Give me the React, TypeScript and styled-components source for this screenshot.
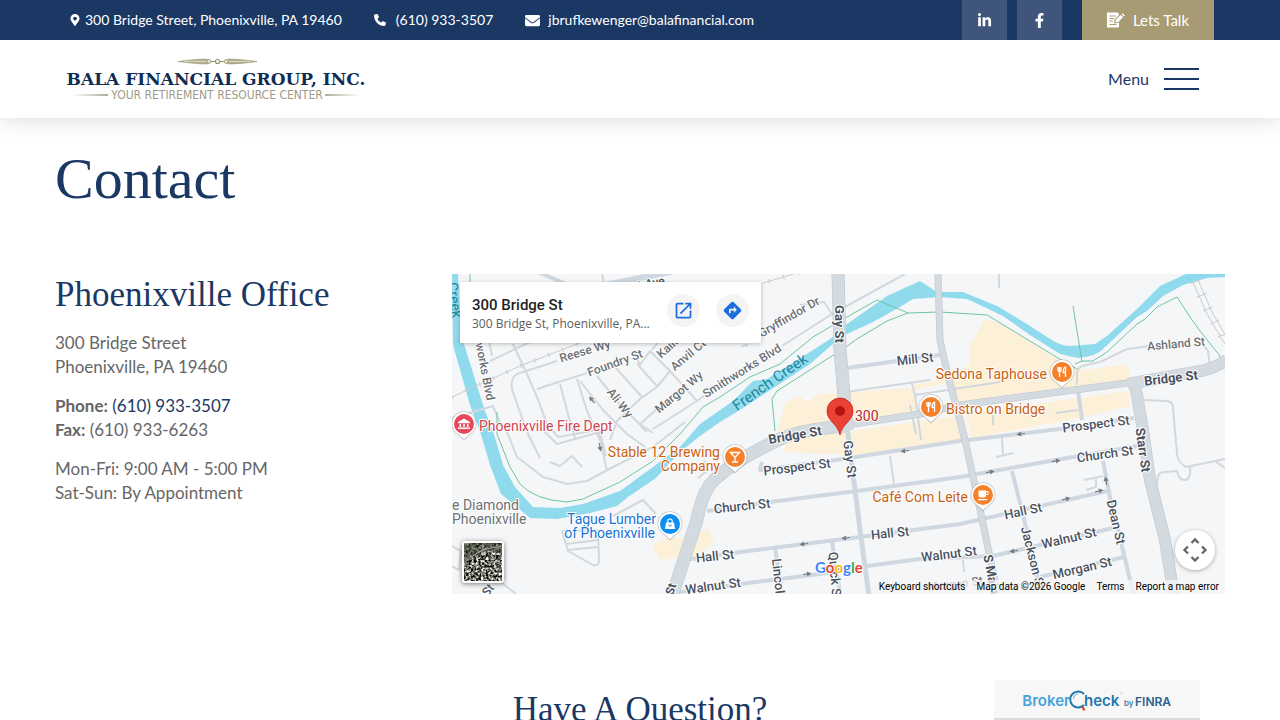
import React from "react";
import styled, { createGlobalStyle } from "styled-components";
import { FaMapMarkerAlt, FaEnvelope, FaLinkedinIn, FaFacebookF } from "react-icons/fa";
import { FaPhone } from "react-icons/fa6";
import { MdOpenInNew, MdDirections } from "react-icons/md";

const navy = "#1b3865";
const sans = `Lato, "Open Sans", sans-serif`;
const serif = `"Liberation Serif", serif`;

const GlobalStyle = createGlobalStyle`
  *, *::before, *::after { box-sizing: border-box; }
  body { margin: 0; background: #fff; color: #666; font: 17px/24px ${sans}; }
  a { color: inherit; text-decoration: none; }
  h1, h2, p { margin: 0; }
  button { border: 0; padding: 0; font: inherit; cursor: pointer; }
`;

const TopBar = styled.div`
  background: ${navy};
  padding: 0 66px;
`;

const Inner = styled.div`
  max-width: 1148px;
  margin: 0 auto;
  display: flex;
  align-items: center;
  justify-content: space-between;
`;

const ContactList = styled.div`
  display: flex;
  align-items: center;
  gap: 32px;
  padding-left: 3px;
  color: #fff;
  font-size: 14px;
  line-height: 40px;
`;

const ContactLink = styled.a<{ $gap: number }>`
  display: flex;
  align-items: center;
  gap: ${(p) => p.$gap}px;
`;

const TopActions = styled.div`
  display: flex;
  gap: 10px;
`;

const SocialLink = styled.a`
  width: 45px;
  height: 40px;
  display: flex;
  align-items: center;
  justify-content: center;
  background: #40557c;
  color: #fff;
  font-size: 15px;
`;

const TalkButton = styled.a`
  width: 132px;
  height: 40px;
  margin-left: 10px;
  display: flex;
  align-items: center;
  justify-content: center;
  gap: 8px;
  background: #a79b74;
  color: #fff;
  font-size: 15px;
`;

const Header = styled.header`
  position: relative;
  padding: 0 66px;
  background: #fff;
  box-shadow: 0 0 22px rgba(0, 0, 0, 0.16);
  clip-path: inset(0 0 -40px 0);
`;

const HeaderInner = styled(Inner)`
  height: 78px;
`;

const HomeLink = styled.a`
  display: flex;
`;

const MenuButton = styled.button`
  display: flex;
  align-items: center;
  gap: 15px;
  margin-right: 15px;
  background: none;
  color: ${navy};
  font-size: 16px;
`;

const Burger = styled.span`
  width: 35px;
  height: 22px;
  display: flex;
  flex-direction: column;
  justify-content: space-between;
  & > span { height: 2px; background: ${navy}; }
`;

const Main = styled.main`
  max-width: 1210px;
  margin: 0 auto;
  padding: 31px 20px 60px;
`;

const PageTitle = styled.h1`
  font: 400 58px/60px ${serif};
  color: ${navy};
`;

const SectionTitle = styled.h2<{ $center?: boolean }>`
  font: 400 35px/42px ${serif};
  color: ${navy};
  text-align: ${(p) => (p.$center ? "center" : "left")};
`;

const Office = styled.section`
  display: grid;
  grid-template-columns: 367px minmax(0, 1fr);
  gap: 30px;
  margin-top: 65px;
  margin-bottom: 95px;
`;

const OfficeInfo = styled.div`
  display: flex;
  flex-direction: column;
  gap: 15px;
`;

const PhoneLink = styled.a`
  color: ${navy};
`;

const MapFrame = styled.div`
  position: relative;
  height: 320px;
  overflow: hidden;
  background: #f5f6f7;
  font-family: Roboto, sans-serif;
`;

const MapDrawing = styled.svg`
  display: block;
  width: 100%;
  height: 100%;
`;

const PlaceCard = styled.div`
  position: absolute;
  top: 8px;
  left: 8px;
  width: 301px;
  height: 61px;
  padding: 0 12px;
  display: flex;
  align-items: center;
  background: #fff;
  box-shadow: 0 1px 4px rgba(0, 0, 0, 0.25);
`;

const PlaceText = styled.div`
  flex: 1;
  font: 400 12px/16px "Open Sans", sans-serif;
  color: #5e5e5e;
  white-space: nowrap;
`;

const PlaceName = styled.div`
  font: 500 15px/22px Roboto, sans-serif;
  color: #1f1f1f;
`;

const RoundLink = styled.a`
  width: 33px;
  height: 33px;
  margin-left: 16px;
  flex: none;
  display: flex;
  align-items: center;
  justify-content: center;
  border-radius: 50%;
  background: #f4f4f4;
  color: #1a6ee0;
  font-size: 21px;
`;

const PlaceActions = styled.div`
  display: flex;
  padding-bottom: 4px;
`;

const Attribution = styled.div`
  position: absolute;
  right: 0;
  bottom: 0;
  height: 14px;
  padding: 0 6px;
  display: flex;
  gap: 11px;
  background: rgba(245, 245, 245, 0.75);
  font: 400 10px/14px Roboto, sans-serif;
  color: #000;
  white-space: nowrap;
`;

const AttributionButton = styled.button`
  background: none;
  color: inherit;
`;

const PanButton = styled.button`
  position: absolute;
  right: 10px;
  bottom: 24px;
  width: 40px;
  height: 40px;
  border-radius: 50%;
  background: #fff;
  box-shadow: 0 1px 4px rgba(0, 0, 0, 0.3);
  & > svg { display: block; }
`;

const SatelliteButton = styled.button`
  position: absolute;
  left: 10px;
  bottom: 11px;
  width: 42px;
  height: 42px;
  border: 2px solid #fff;
  border-radius: 3px;
  overflow: hidden;
  background: #4a4a42;
  box-shadow: 0 1px 5px rgba(0, 0, 0, 0.5);
  & > svg { display: block; }
`;

const BrokerCheck = styled.a`
  position: fixed;
  right: 80px;
  bottom: 0;
  width: 206px;
  height: 40px;
  display: flex;
  justify-content: center;
  background: #f7f7f7;
  border-bottom: 2px solid #dcdcdc;
`;

const FormIcon = () => (
  <svg width="18" height="16" viewBox="0 0 18 16" aria-hidden="true">
    <path d="M0 0.500h10.500l1.500 1.500V3L7.500 7.500 7 11.500l4-.5 1-1V15.500H0z" fill="#fff" />
    <path d="M2.500 4h6.500M2.500 6.500h4.500M2.500 9h3.500M2.500 12.500h7" stroke="#a79b74" strokeWidth="1" />
    <path d="M8.300 10.600l.6-3 4.800-4.600 2.400 2.300-4.800 4.700zM14.500 2.200l1.100-1 2.300 2.300-1.100 1z" fill="#fff" />
  </svg>
);

const Logo = () => (
  <svg width="302" height="44" viewBox="0 0 302 44" role="img" aria-label="Bala Financial Group, Inc.">
    <g fill="#b3b08f" stroke="#8f8e66" strokeWidth="0.5">
      <path d="M112 4.500C122 3.200 132 2 140 2C144 2.500 145 3.500 146 4.500C145 5.500 144 6.500 140 7C132 7 122 5.800 112 4.500Z" />
      <path d="M191 4.500C181 3.200 171 2 163 2C159 2.500 158 3.500 157 4.500C158 5.500 159 6.500 163 7C171 7 181 5.800 191 4.500Z" />
      <path d="M118 4.500H140M163 4.500H185" stroke="#fff" />
      <circle cx="151.500" cy="4.500" r="2" fill="#fff" stroke="#8f8e66" strokeWidth="1.100" />
      <circle cx="143" cy="4.500" r="1.400" fill="#fff" />
      <circle cx="160" cy="4.500" r="1.400" fill="#fff" />
      <path d="M146 4.500h3M154 4.500h3" strokeWidth="1.200" />
    </g>
    <text x="150" y="28" textAnchor="middle" fontFamily="DejaVu Serif, serif" fontWeight="700" fontSize="17" fill="#0f2d54">
      BALA FINANCIAL GROUP, INC.
    </text>
    <text x="151" y="42" textAnchor="middle" fontFamily="DejaVu Sans Condensed, DejaVu Sans, sans-serif" fontSize="12" fill="#a09a88">
      YOUR RETIREMENT RESOURCE CENTER
    </text>
    <path d="M5 38L42 37V39ZM294 38L259 37V39Z" fill="#b0ab9b" />
  </svg>
);

type Road = [string, number?];

const casedRoads: Road[] = [
  ["M672 596L697 520Q702 492 714 480Q735 460 780 439Q800 430 845 426", 12],
  ["M1128 384L1195 372Q1212 370 1227 360", 11],
  ["M838 272L840 350L847 430", 12],
  ["M840 426L920 414L960 405L1135 382", 6],
  ["M938 272L940 340L947 372L965 440L978 500L990 557L998 596", 6],
  ["M1135 384L1143 430L1150 480L1165 540L1174 596", 11],
];

const streets: Road[] = [
  ["M847 426L855 490L862 545L869 596", 5],
  ["M847 368L940 355"],
  ["M762 462L760 470L830 461L960 441L1060 429L1134 418"],
  ["M707 511L770 502L857 491L960 477L1073 457L1138 446"],
  ["M685 560L733 553L860 537L960 524L1107 491"],
  ["M680 592L740 584L820 574L867 566L920 559L993 556L1113 528"],
  ["M1040 577L1124 557"],
  ["M1103 461L1110 497L1134 596"],
  ["M1012 471L1027 531L1040 590"],
  ["M775 547L782 594"],
  ["M832 541L840 594"],
  ["M1078 391L1082 420"],
  ["M538 272L566 284"],
  ["M590 288L700 266", 6],
];

const lanes: string[] = [
  "M846 392L930 380M912 384L915 395L1000 382M915 395L921 440",
  "M890 456L894 484M1002 438L1003 455M996 457L1014 453M1056 413L1078 410M993 415V425",
  "M1084 480L1103 476M1096 479V487L1086 490",
  "M1143 400L1168 401Q1173 402 1173 408L1177 454Q1178 463 1186 467L1225 459",
  "M1156 492L1158 477Q1159 472 1165 472L1177 471Q1179 481 1186 480Q1191 478 1190 467M1215 461L1225 468",
  "M1077 385V373Q1077 367 1086 365L1100 362L1127 349L1150 346M1201 342L1208 351L1210 366",
  "M999 274V288",
  "M490 361L530 342M452 418L493 406L503 430M489 342L492 356",
  "M513 344L527 374L537 397L547 424L558 437L602 429",
  "M557 361L517 374Q510 378 512 389L523 421L531 441",
  "M537 389L587 373M560 384L568 414L575 438",
  "M577 379L587 411L600 440M580 381L603 410L627 434L645 447",
  "M597 376L620 404L647 432M615 367L642 397M637 364L657 386M634 353L640 365L650 351L670 371L697 401",
  "M670 371L657 387L640 399L617 421L610 440M640 424L657 409L687 387",
  "M653 429L697 401L720 384M640 424L653 433",
  "M782 346L832 314L824 302L800 305M832 314L905 274M748 345L742 346",
  "M507 432L517 457L543 477L567 484L587 481L613 467L653 447L685 422",
  "M528 434L540 458M543 430L557 444L600 432L606 456M550 462L560 466L572 456L582 467M597 426L607 471",
  "M613 516L643 500L656 514M562 531L568 551L593 565Q599 567 599 560L598 530L562 531M567 550L598 547M566 544L598 540",
  "M452 546L461 551L459 570L452 566M462 570L480 566L516 594",
  "M600 264L604 284M660 340L652 350M698 478L708 470L704 460",
  "M963 560L964 572M916 434L910 405",
];

const trails: string[] = [
  "M470 274V282M497 412V434L510 467L520 484Q535 500 567 502L583 499L620 482L653 461L680 434L703 407L720 397L750 377L780 364L813 337L840 321L877 300L908 313L940 312L987 315L1063 361L1077 369",
  "M908 313L887 321L857 339L843 349L777 391L772 399L775 431",
  "M1073 306L1082 362M1075 364L1082 361L1093 361L1107 352L1137 324L1145 319L1157 307L1177 297L1190 317L1200 331L1220 356V359L1215 363",
];

const rails: string[] = [
  "M452 397L520 366L600 335M740 290L800 272",
  "M1193 282L1207 314L1226 346M1198 280L1212 312L1228 340",
];

const arrows: [number, number, number][] = [
  [905, 451, 173], [804, 544, 173], [846, 538, 173], [807, 574, -7], [1021, 434, 173],
  [990, 472, -8], [1056, 461, -8], [1066, 499, -13], [1099, 491, -13], [1014, 551, 170],
  [1106, 481, -100], [592, 400, 230], [600, 447, 80],
];

type Label = [string, number, number, number, string, number?, number?];
const gray = "#6b7075";
const slate = "#4a5260";

const labels: Label[] = [
  ["Reese Wy", 585, 351, -17, gray],
  ["Foundry St", 615, 363, -20, gray],
  ["Kaila Ct", 674, 342, -42, gray],
  ["Anvil Ct", 688, 355, -40, gray],
  ["Margot Wy", 679, 392, -40, gray],
  ["Smithworks Blvd", 742, 371, -32, gray],
  ["Gryffindor Dr", 789, 317, -30, gray],
  ["Ali Wy", 620, 403, 52, gray],
  ["Smithworks Blvd", 482, 356, 79, gray],
  ["Ashland St", 1176, 344, -5, gray],
  ["Walnut Ave", 635, 286, -10, slate],
  ["Mill St", 915, 359, -6, slate, 13],
  ["Gay St", 839, 324, 90, slate, 13, 700],
  ["Gay St", 850, 459, 83, slate, 13],
  ["Bridge St", 795, 435, -10, slate, 13, 700],
  ["Bridge St", 1171, 378, -7, slate, 13, 700],
  ["Prospect St", 797, 467, -7, slate, 13],
  ["Prospect St", 1096, 424, -7, slate, 13],
  ["Church St", 742, 506, -6, slate, 13],
  ["Church St", 1105, 454, -8, slate, 13],
  ["Starr St", 1143, 450, 82, slate, 13, 700],
  ["Hall St", 715, 556, -6, slate, 13],
  ["Hall St", 890, 533, -6, slate, 13],
  ["Hall St", 1023, 511, -12, slate, 13],
  ["Walnut St", 713, 586, -8, slate, 13],
  ["Walnut St", 949, 554, -7, slate, 13],
  ["Walnut St", 1069, 538, -13, slate, 13],
  ["Morgan St", 1082, 568, -13, slate, 13],
  ["Morgan St", 955, 584, -7, gray],
  ["Dean St", 1116, 522, 77, slate, 13],
  ["Jackson St", 1033, 558, 76, slate, 13],
  ["S Main St", 993, 582, 79, slate, 13, 700],
  ["Lincoln Ave", 780, 592, 84, slate, 13],
  ["Quick St", 835, 576, 85, slate, 13],
  ["St", 671, 589, -72, slate, 12, 700],
  ["St", 488, 590, -50, slate],
  ["French Creek", 770, 382, -35, "#1b8699", 15, 400],
  ["Creek", 455, 300, 82, "#1b8699", 14, 400],
];

type Place = [string, number, number, "start" | "end", string];
const orange = "#c9610f";

const places: Place[] = [
  ["Phoenixville Fire Dept", 479, 431, "start", "#cf4453"],
  ["Stable 12 Brewing", 720, 457, "end", orange],
  ["Company", 720, 471, "end", orange],
  ["Tague Lumber", 656, 524, "end", "#1a73d4"],
  ["of Phoenixville", 655, 538, "end", "#1a73d4"],
  ["e Diamond", 452, 510, "start", gray],
  ["Phoenixville", 452, 524, "start", gray],
  ["Sedona Taphouse", 1047, 379, "end", orange],
  ["Bistro on Bridge", 946, 414, "start", orange],
  ["Café Com Leite", 968, 502, "end", orange],
  ["300", 855, 421, "start", "#b3261e"],
];

const fork = (
  <path d="M-4 -5v3q0 1.500 1.500 1.500M-2.500 -5V5M-1 -5v3q0 1.500 -1.500 1.500M3.500 5V-5Q1 -4 1.200 0.500H3.500" fill="none" stroke="#fff" strokeWidth="1.300" />
);
const cocktail = <path d="M-4.500 -4.500H4.500L0 0.500ZM0 0V5M-3 5H3" fill="none" stroke="#fff" strokeWidth="1.300" />;
const cup = (
  <g>
    <path d="M-4.500 -4.500H3V0Q3 2.500 0.500 2.500H-2Q-4.500 2.500 -4.500 0ZM-5 4H4V5.200H-5Z" fill="#fff" />
    <path d="M3 -3.500H5V-0.500H3" fill="none" stroke="#fff" />
  </g>
);
const bag = (
  <g>
    <path d="M-4 -1.500H4L5 5H-5Z" fill="#fff" />
    <path d="M-2.200 -1V-3Q-2.200 -5 0 -5Q2.200 -5 2.200 -3V-1" fill="none" stroke="#fff" strokeWidth="1.200" />
    <path d="M-1.800 1Q0 3.500 1.800 1" fill="none" stroke="#0c8ff0" />
  </g>
);
const museum = (
  <path d="M-6 -2L0 -5.500L6 -2V-0.800H-6ZM-4.500 0H-3V3H-4.500ZM-0.800 0H0.800V3H-0.800ZM3 0H4.500V3H3ZM-6 3.500H6V5H-6Z" fill="#fff" />
);

const pins: [number, number, string, React.ReactNode][] = [
  [464, 424, "#e7495c", museum],
  [735, 457, "#f5822a", cocktail],
  [670, 524, "#0c8ff0", bag],
  [1062, 372, "#f5822a", fork],
  [931, 407, "#f5822a", fork],
  [983, 495, "#f5822a", cup],
];

const TownMap = () => (
  <MapDrawing viewBox="452 274 773 320" preserveAspectRatio="xMidYMid slice" role="img" aria-label="Map of 300 Bridge St">
    <g fill="#fdf0d9">
      <path d="M786 402L800 396L806 402L820 394L912 388L920 412L776 436Z" />
      <path d="M783 452L790 440L850 431L965 415L968 440L860 455Z" />
      <path d="M985 318L1006 326L1062 362L1085 370L1126 364L1132 380L958 404L950 382L915 390L913 385L948 378L970 364L968 350Z" />
      <path d="M968 413L1128 391L1130 406L1080 418L970 438Z" />
      <path d="M652 545L665 538H690L708 528L714 542L696 556L660 560Z" />
    </g>
    <path
      fill="#90daee"
      d="M452 274H458L460 320L463 341L485 411L493 431L503 465L515 487L533 507L560 508L583 504L620 491L653 467L680 447L700 424L733 401L753 381L767 379L807 354L833 337L847 324L887 296L920 281L937 292L963 292L997 306L1027 324L1047 337Q1060 346 1070 346L1095 344L1107 336L1137 309L1160 286L1186 274H1225V277L1207 278L1183 285L1163 296L1147 311L1137 317L1103 349Q1097 356 1078 358L1060 354L1030 335L1003 316L980 305L967 299L940 297L913 299L900 307L873 322L847 334L833 344L810 364L743 408L720 422L700 436L680 452L656 478L628 497L617 506L590 513L557 519L530 518L517 507L501 494L490 465L480 431L470 405L453 345Z"
    />
    <g fill="none" stroke="#d3d8dd" strokeWidth="2" strokeLinejoin="round">
      {lanes.map((d) => <path key={d} d={d} />)}
    </g>
    <g fill="none" stroke="#c9cccf" strokeWidth="1">
      {rails.map((d) => <path key={d} d={d} />)}
      {rails.map((d) => <path key={d + "t"} d={d} strokeWidth="5" strokeDasharray="1 14" />)}
    </g>
    <g fill="none" stroke="#6fc5a2" strokeWidth="1">
      {trails.map((d) => <path key={d} d={d} />)}
    </g>
    <g fill="none" stroke="#cfd8e0" strokeLinejoin="round">
      {streets.map(([d, w = 4]) => <path key={d} d={d} strokeWidth={w} />)}
    </g>
    <g fill="none" stroke="#bcc6cf" strokeLinejoin="round">
      {casedRoads.map(([d, w = 6]) => <path key={d} d={d} strokeWidth={w + 1} />)}
    </g>
    <g fill="none" stroke="#d3dae0" strokeLinejoin="round">
      {casedRoads.map(([d, w = 6]) => <path key={d} d={d} strokeWidth={w} />)}
    </g>
    <g fill="#74797e">
      {arrows.map(([x, y, r]) => (
        <path key={`${x}-${y}`} transform={`translate(${x} ${y}) rotate(${r})`} d="M-4 -0.600H0V-2.500L4.500 0L0 2.500V0.600H-4Z" />
      ))}
    </g>
    <g stroke="#fff" strokeWidth="2" strokeLinejoin="round" paintOrder="stroke">
      {labels.map(([t, x, y, r, fill, size = 12, weight = 500]) => (
        <text
          key={`${t}-${x}`}
          transform={`translate(${x} ${y}) rotate(${r})`}
          textAnchor="middle"
          dominantBaseline="central"
          fill={fill}
          stroke={t.includes("Creek") ? "none" : undefined}
          fontSize={size}
          fontWeight={weight}
        >
          {t}
        </text>
      ))}
      {places.map(([t, x, y, anchor, fill]) => (
        <text key={`${t}-${x}-${y}`} x={x} y={y} textAnchor={anchor} fill={fill} fontSize="14">
          {t}
        </text>
      ))}
    </g>
    {pins.map(([x, y, fill, glyph]) => (
      <g key={`${x}-${y}`} transform={`translate(${x} ${y})`}>
        <path d="M0 16.500L-7 10A12.500 12.500 0 1 1 7 10Z" fill="#8a8f94" opacity="0.45" />
        <path d="M0 15L-7 9A11.700 11.700 0 1 1 7 9Z" fill="#fff" />
        <circle r="10" fill={fill} />
        {glyph}
      </g>
    ))}
    <path d="M840 435C838 424 827 421 827 411A13 13 0 1 1 853 411C853 421 842 424 840 435Z" fill="#ea4335" stroke="#c5221f" strokeWidth="0.800" />
    <circle cx="840" cy="411" r="5" fill="#b31412" />
    <text x="815" y="573" fontFamily="Lato, sans-serif" fontSize="15" fontWeight="700" stroke="#fff" strokeWidth="2" paintOrder="stroke">
      <tspan fill="#4285f4">G</tspan>
      <tspan fill="#ea4335">o</tspan>
      <tspan fill="#fbbc04">o</tspan>
      <tspan fill="#4285f4">g</tspan>
      <tspan fill="#34a853">l</tspan>
      <tspan fill="#ea4335">e</tspan>
    </text>
  </MapDrawing>
);

const SatelliteThumb = () => (
  <svg width="38" height="38" viewBox="0 0 38 38" aria-hidden="true">
    <filter id="roofs" x="0" y="0" width="100%" height="100%" colorInterpolationFilters="sRGB">
      <feTurbulence type="fractalNoise" baseFrequency="0.400" numOctaves="3" seed="8" />
      <feColorMatrix type="matrix" values="2.200 0 0 0 -0.660  2.200 0 0 0 -0.660  2.200 0 0 0 -0.690  0 0 0 0 1" />
    </filter>
    <rect width="38" height="38" filter="url(#roofs)" />
    <path d="M0 0H38V10L20 8L0 20Z" fill="#39432f" opacity="0.5" />
    <path d="M0 19L18 7L38 3M19 0V13M28 18L38 22" stroke="#a5a5a0" strokeWidth="1" fill="none" />
  </svg>
);

const BrokerCheckLogo = () => (
  <svg width="152" height="38" viewBox="0 0 152 38" role="img" aria-label="BrokerCheck by FINRA">
    <g fontFamily="Inter, sans-serif" fontWeight="600">
      <text x="49" y="26" textAnchor="end" fontSize="15" fill="#46a3da">Broker</text>
      <text x="63" y="26" fontSize="15" fill="#2577ae">heck</text>
      <text x="103" y="26" fontSize="8" fill="#4b7fa8">by</text>
      <text x="114" y="26" fontSize="12" fill="#2b6290">FINRA</text>
    </g>
    <path d="M63 14A8 8 0 1 0 63 25" fill="none" stroke="#2577ae" strokeWidth="2" />
    <path d="M52.500 19Q53 14.500 57 14" fill="none" stroke="#7cc1e8" strokeWidth="1.200" />
    <path d="M61.500 27L63.500 30.500" stroke="#e5532d" strokeWidth="2.500" />
    <circle cx="100.500" cy="13" r="0.800" fill="#9bb" />
  </svg>
);

export default function App() {
  return (
    <>
      <GlobalStyle />
      <TopBar>
        <Inner>
          <ContactList>
            <ContactLink href="#map" $gap={4}>
              <FaMapMarkerAlt size={12} /> 300 Bridge Street, Phoenixville, PA 19460
            </ContactLink>
            <ContactLink href="tel:6109333507" $gap={10}>
              <FaPhone size={12} /> (610) 933-3507
            </ContactLink>
            <ContactLink href="mailto:jbrufkewenger@balafinancial.com" $gap={8}>
              <FaEnvelope size={15} /> jbrufkewenger@balafinancial.com
            </ContactLink>
          </ContactList>
          <TopActions>
            <SocialLink href="#linkedin" aria-label="LinkedIn"><FaLinkedinIn /></SocialLink>
            <SocialLink href="#facebook" aria-label="Facebook"><FaFacebookF /></SocialLink>
            <TalkButton href="#talk"><FormIcon /> Lets Talk</TalkButton>
          </TopActions>
        </Inner>
      </TopBar>
      <Header>
        <HeaderInner>
          <HomeLink href="#home"><Logo /></HomeLink>
          <MenuButton type="button">
            Menu
            <Burger><span /><span /><span /></Burger>
          </MenuButton>
        </HeaderInner>
      </Header>
      <Main>
        <PageTitle>Contact</PageTitle>
        <Office>
          <OfficeInfo>
            <SectionTitle>Phoenixville Office</SectionTitle>
            <p>300 Bridge Street<br />Phoenixville, PA 19460</p>
            <p>
              <strong>Phone:</strong> <PhoneLink href="tel:6109333507">(610) 933-3507</PhoneLink><br />
              <strong>Fax:</strong> (610) 933-6263
            </p>
            <p>Mon-Fri: 9:00 AM - 5:00 PM<br />Sat-Sun: By Appointment</p>
          </OfficeInfo>
          <MapFrame id="map">
            <TownMap />
            <PlaceCard>
              <PlaceText>
                <PlaceName>300 Bridge St</PlaceName>
                300 Bridge St, Phoenixville, PA...
              </PlaceText>
              <PlaceActions>
                <RoundLink href="#open" aria-label="Open in Maps"><MdOpenInNew /></RoundLink>
                <RoundLink href="#directions" aria-label="Directions"><MdDirections /></RoundLink>
              </PlaceActions>
            </PlaceCard>
            <SatelliteButton type="button" aria-label="Show satellite imagery"><SatelliteThumb /></SatelliteButton>
            <PanButton type="button" aria-label="Map camera controls">
              <svg width="40" height="40" viewBox="0 0 40 40">
                <path d="M16.500 13L20 9.500L23.500 13M16.500 27L20 30.500L23.500 27M13 16.500L9.500 20L13 23.500M27 16.500L30.500 20L27 23.500" fill="none" stroke="#666" strokeWidth="2.400" />
              </svg>
            </PanButton>
            <Attribution>
              <AttributionButton type="button">Keyboard shortcuts</AttributionButton>
              <span>Map data ©2026 Google</span>
              <a href="#terms">Terms</a>
              <a href="#report">Report a map error</a>
            </Attribution>
          </MapFrame>
        </Office>
        <SectionTitle $center>Have A Question?</SectionTitle>
      </Main>
      <BrokerCheck href="#brokercheck"><BrokerCheckLogo /></BrokerCheck>
    </>
  );
}
